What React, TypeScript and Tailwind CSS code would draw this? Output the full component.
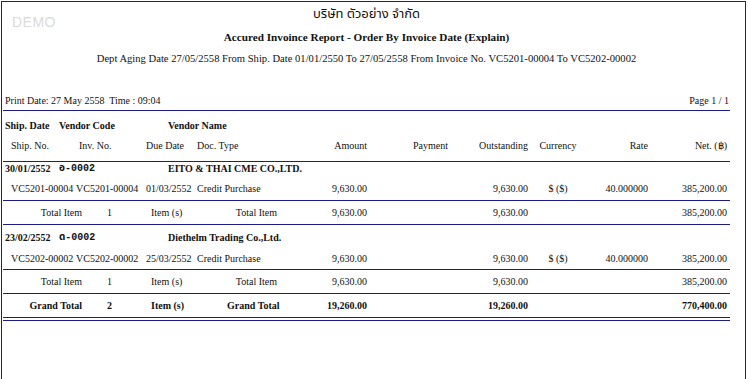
const serif = "font-['Liberation_Serif','Times_New_Roman',serif]";

interface Detail {
  shipNo: string;
  invNo: string;
  dueDate: string;
  docType: string;
  amount: string;
  outstanding: string;
  currency: string;
  rate: string;
  net: string;
}

interface Group {
  shipDate: string;
  vendorCode: string;
  vendorName: string;
  details: Detail[];
  count: string;
  amount: string;
  outstanding: string;
  net: string;
}

const groups: Group[] = [
  {
    shipDate: '30/01/2552',
    vendorCode: 'อ-0002',
    vendorName: 'EITO & THAI CME CO.,LTD.',
    details: [
      {
        shipNo: 'VC5201-00004',
        invNo: 'VC5201-00004',
        dueDate: '01/03/2552',
        docType: 'Credit Purchase',
        amount: '9,630.00',
        outstanding: '9,630.00',
        currency: '$ ($)',
        rate: '40.000000',
        net: '385,200.00',
      },
    ],
    count: '1',
    amount: '9,630.00',
    outstanding: '9,630.00',
    net: '385,200.00',
  },
  {
    shipDate: '23/02/2552',
    vendorCode: 'ด-0002',
    vendorName: 'Diethelm Trading Co.,Ltd.',
    details: [
      {
        shipNo: 'VC5202-00002',
        invNo: 'VC5202-00002',
        dueDate: '25/03/2552',
        docType: 'Credit Purchase',
        amount: '9,630.00',
        outstanding: '9,630.00',
        currency: '$ ($)',
        rate: '40.000000',
        net: '385,200.00',
      },
    ],
    count: '1',
    amount: '9,630.00',
    outstanding: '9,630.00',
    net: '385,200.00',
  },
];

function DetailCols({ d, head }: { d: Detail; head?: boolean }) {
  return (
    <>
      <div className="w-[72px] pl-[8px] whitespace-nowrap">{d.shipNo}</div>
      <div className={`w-[71px] whitespace-nowrap ${head ? 'pl-[4px]' : 'pl-[1px]'}`}>{d.invNo}</div>
      <div className="w-[51px] whitespace-nowrap">{d.dueDate}</div>
      <div className="w-[106px] whitespace-nowrap">{d.docType}</div>
      <div className="w-[66px] text-right pr-[2px] whitespace-nowrap">{d.amount}</div>
      <div className="w-[81px] text-right pr-[2px] whitespace-nowrap">{head ? 'Payment' : ''}</div>
      <div className="w-[78px] text-right whitespace-nowrap">{d.outstanding}</div>
      <div className="w-[60px] text-center whitespace-nowrap">{d.currency}</div>
      <div className="w-[62px] text-right pr-[2px] whitespace-nowrap">{d.rate}</div>
      <div className="w-[80px] text-right pr-[3px] whitespace-nowrap">{d.net}</div>
    </>
  );
}

function TotalRow({ label, count, amount, outstanding, net, bold }: {
  label: string;
  count: string;
  amount: string;
  outstanding: string;
  net: string;
  bold?: boolean;
}) {
  return (
    <div className={`flex items-center h-[24px] border-b border-[#1b1b8a] ${bold ? 'font-bold' : ''}`}>
      <div className="w-[81px] text-right pr-[2px] whitespace-nowrap">{label}</div>
      <div className="w-[67px] pl-[23px]">{count}</div>
      <div className="w-[76px] whitespace-nowrap">Item (s)</div>
      <div className="w-[52px] text-right pr-[2px] whitespace-nowrap">{label}</div>
      <div className="w-[90px] text-right pr-[2px]">{amount}</div>
      <div className="w-[161px] text-right pr-[2px]">{outstanding}</div>
      <div className="w-[200px] text-right pr-[3px]">{net}</div>
    </div>
  );
}

export default function App() {
  return (
    <div className="w-[748px] h-[379px] overflow-hidden bg-white pl-[1px] pt-[1px]">
      <div className={`relative w-[745px] h-[400px] border border-[#1b1b8a] text-[10px] text-[#111] ${serif}`}>
        <div className="absolute left-[10px] top-[10px] text-[14px] text-[#dadada] font-['Liberation_Sans',Arial,sans-serif] tracking-[0.5px]">
          DEMO
        </div>

        <div className="ml-px w-[727px]">
          <div className="h-[24px] leading-[24px] text-center text-[13px] font-['Liberation_Serif','Noto_Sans_Thai','Noto_Sans',serif]">
            บริษัท ตัวอย่าง จำกัด
          </div>
          <div className="h-[22px] leading-[22px] text-center text-[11.2px] font-bold">
            Accured Invoince Report - Order By Invoice Date (Explain)
          </div>
          <div className="h-[22px] leading-[22px] text-center text-[10.6px]">
            Dept Aging Date 27/05/2558 From Ship. Date 01/01/2550 To 27/05/2558 From Invoice No. VC5201-00004 To VC5202-00002
          </div>

          <div className="mt-[20px] h-[21px] flex items-center justify-between border-b border-[#1b1b8a] pl-[2px] pr-[1px]">
            <span className="whitespace-pre">Print Date: 27 May 2558  Time : 09:04</span>
            <span>Page 1 / 1</span>
          </div>

          <div className="border-b border-[#1b1b8a]">
            <div className="flex items-center h-[28px] font-bold">
              <div className="w-[56px] pl-[2px] whitespace-nowrap">Ship. Date</div>
              <div className="w-[109px] whitespace-nowrap">Vendor Code</div>
              <div className="whitespace-nowrap">Vendor Name</div>
            </div>
            <div className="flex items-start h-[22px] leading-[14px]">
              <DetailCols
                head
                d={{
                  shipNo: 'Ship. No.',
                  invNo: 'Inv. No.',
                  dueDate: 'Due Date',
                  docType: 'Doc. Type',
                  amount: 'Amount',
                  outstanding: 'Outstanding',
                  currency: 'Currency',
                  rate: 'Rate',
                  net: 'Net. (฿)',
                }}
              />
            </div>
          </div>

          {groups.map((g, gi) => (
            <div key={gi}>
              <div className={`border-b border-[#1b1b8a] ${gi === 0 ? '' : 'pt-[6px]'}`}>
                <div className="flex items-center h-[14px] leading-[14px] font-bold">
                  <div className="w-[56px] pl-[2px] whitespace-nowrap">{g.shipDate}</div>
                  <div className="w-[109px] h-[14px] leading-[14px] overflow-visible text-[10px] font-['Liberation_Mono','Noto_Sans_Thai',monospace] whitespace-nowrap">
                    {g.vendorCode}
                  </div>
                  <div className="whitespace-nowrap">{g.vendorName}</div>
                </div>
                {g.details.map((d, di) => (
                  <div key={di} className={`flex items-center h-[24px] ${gi === 0 ? '' : 'pt-[2px]'}`}>
                    <DetailCols d={d} />
                  </div>
                ))}
              </div>
              <TotalRow label="Total Item" count={g.count} amount={g.amount} outstanding={g.outstanding} net={g.net} />
            </div>
          ))}

          <TotalRow label="Grand Total" count="2" amount="19,260.00" outstanding="19,260.00" net="770,400.00" bold />
          <div className="h-[3px] border-b border-[#1b1b8a]" />
        </div>
      </div>
    </div>
  );
}
